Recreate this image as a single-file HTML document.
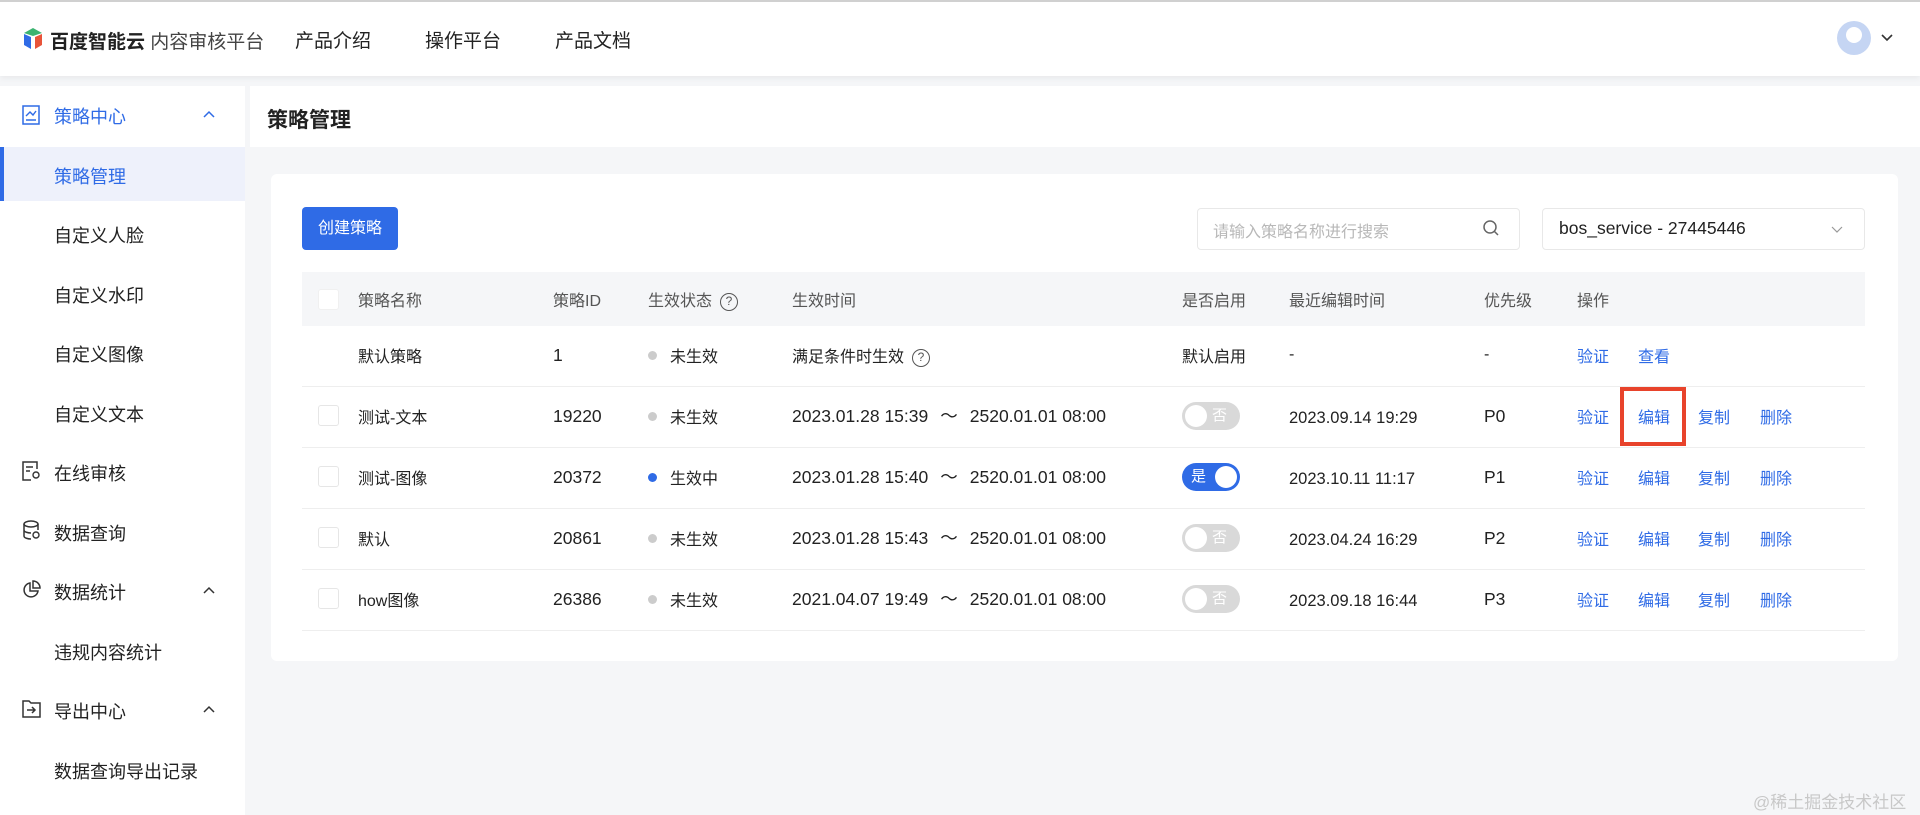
<!DOCTYPE html>
<html><head><meta charset="utf-8"><style>
*{margin:0;padding:0;box-sizing:border-box}
body{width:1920px;height:815px;overflow:hidden;background:#f5f6f8;font-family:"Liberation Sans","Noto Sans CJK SC",sans-serif;color:#222;position:relative}
.a{position:absolute;white-space:nowrap}
.hdr{left:0;top:0;width:1920px;height:76px;background:#fff;border-top:2px solid #d0d0d0;box-shadow:0 2px 6px rgba(0,0,0,.06)}
.nav{font-size:19px;color:#222;top:26px}
.side{left:0;top:86px;width:245px;height:729px;background:#fff}
.si{font-size:18px;color:#222;left:54px}
.sel{left:0;top:147px;width:245px;height:54px;background:#eef1fb;border-left:4px solid #2f6be6}
.card{left:271px;top:174px;width:1627px;height:487px;background:#fff;border-radius:6px}
.th,.td,.lk{line-height:22px;height:22px}
.th{font-size:16px;color:#555;transform:translateY(3px)}
.td{font-size:16px;color:#222}
.c{transform:translateY(3px)}
.et{font-size:16.5px;transform:translateY(2px)}
.big{font-size:17.5px}
.lk{font-size:16px;color:#2f6be6;transform:translateY(3px)}
.cb{width:21px;height:21px;border:1px solid #e6e6e6;border-radius:3px;background:#fff}
.dot{width:9px;height:9px;border-radius:50%;background:#ccc}
.tg{width:58px;height:28px;border-radius:14px;background:#d9d9d9}
.tg i{position:absolute;top:3px;width:22px;height:22px;border-radius:50%;background:#fff}
.tg span{position:absolute;top:3px;font-size:15px;line-height:22px;color:#fff;font-style:normal}
.line{height:1px;background:#eeeeee;left:302px;width:1563px}
.q{display:inline-block;width:18px;height:18px;border:1.5px solid #555;border-radius:50%;font-size:12px;text-align:center;line-height:15px;color:#555;vertical-align:middle;margin-left:8px;font-family:"Liberation Sans",sans-serif}
.tl{margin:0 12px}
</style></head><body>
<div class="a hdr"></div>
<svg class="a" style="left:22px;top:27px" width="22" height="24" viewBox="0 0 22 24"><path d="M11 1 L20 6 L11 9 L2 6Z" fill="#3cb371"/><path d="M2 7 L9 10 L9 22 L2 18Z" fill="#2f6be6"/><path d="M20 7 L13 10 L13 22 L20 18Z" fill="#e8543a"/></svg>
<div class="a" style="left:50px;top:27px;font-size:19px;font-weight:bold;color:#222">百度智能云 <span style="font-weight:normal;color:#444">内容审核平台</span></div>
<div class="a nav" style="left:295px">产品介绍</div>
<div class="a nav" style="left:425px">操作平台</div>
<div class="a nav" style="left:555px">产品文档</div>
<div class="a" style="left:1837px;top:21px;width:34px;height:34px;border-radius:50%;background:#c5d5f3"></div>
<div class="a" style="left:1846px;top:27px;width:16px;height:16px;border-radius:50%;background:#fff"></div>
<svg class="a" style="left:1880px;top:33px" width="14" height="9"><path d="M2 2 L7 7 L12 2" stroke="#333" stroke-width="1.6" fill="none"/></svg>

<div class="a side"></div>
<div class="a sel"></div>
<svg class="a" style="left:22px;top:105px" width="18" height="20"><rect x="1" y="1" width="16" height="18" fill="none" stroke="#2f6be6" stroke-width="1.5"/><path d="M4 11 L8 7 L11 10 L14 6 M4 15 H14" stroke="#2f6be6" stroke-width="1.4" fill="none"/></svg>
<div class="a si" style="top:103px;color:#2f6be6">策略中心</div>
<svg class="a" style="left:202px;top:110px" width="14" height="9"><path d="M2 7 L7 2 L12 7" stroke="#2f6be6" stroke-width="1.5" fill="none"/></svg>
<div class="a si" style="top:163px;color:#2f6be6">策略管理</div>
<div class="a si" style="top:222px">自定义人脸</div>
<div class="a si" style="top:282px">自定义水印</div>
<div class="a si" style="top:341px">自定义图像</div>
<div class="a si" style="top:401px">自定义文本</div>
<svg class="a" style="left:22px;top:461px" width="18" height="20"><path d="M15 8 V1 H1 V19 H9 M4 6 H11 M4 10 H8" stroke="#333" stroke-width="1.5" fill="none"/><circle cx="14" cy="14" r="3" fill="none" stroke="#333" stroke-width="1.4"/></svg>
<div class="a si" style="top:460px">在线审核</div>
<svg class="a" style="left:22px;top:520px" width="18" height="20"><ellipse cx="9" cy="4" rx="7" ry="3" fill="none" stroke="#333" stroke-width="1.5"/><path d="M2 4 V16 C2 18 6 19 9 19 M16 4 V10 M2 10 C2 12 6 13 9 13" stroke="#333" stroke-width="1.5" fill="none"/><circle cx="14" cy="15" r="3" fill="none" stroke="#333" stroke-width="1.4"/></svg>
<div class="a si" style="top:520px">数据查询</div>
<svg class="a" style="left:22px;top:580px" width="19" height="19"><path d="M8 3 A7 7 0 1 0 16 11 H8 Z" fill="none" stroke="#333" stroke-width="1.5"/><path d="M11 1 A7 7 0 0 1 18 8 H11Z" fill="none" stroke="#333" stroke-width="1.5"/></svg>
<div class="a si" style="top:579px">数据统计</div>
<svg class="a" style="left:202px;top:586px" width="14" height="9"><path d="M2 7 L7 2 L12 7" stroke="#333" stroke-width="1.5" fill="none"/></svg>
<div class="a si" style="top:639px">违规内容统计</div>
<svg class="a" style="left:22px;top:699px" width="19" height="19"><path d="M1 2 H7 L9 4 H18 V18 H1 Z M5 11 H13 M10 8 L13 11 L10 14" stroke="#333" stroke-width="1.5" fill="none"/></svg>
<div class="a si" style="top:698px">导出中心</div>
<svg class="a" style="left:202px;top:705px" width="14" height="9"><path d="M2 7 L7 2 L12 7" stroke="#333" stroke-width="1.5" fill="none"/></svg>
<div class="a si" style="top:758px">数据查询导出记录</div>

<div class="a" style="left:250px;top:86px;width:1670px;height:61px;background:#fff"></div>
<div class="a" style="left:267px;top:104px;font-size:21px;font-weight:bold;color:#222">策略管理</div>

<div class="a card"></div>
<div class="a" style="left:302px;top:207px;width:96px;height:43px;background:#2f6be6;border-radius:4px;color:#fff;font-size:16px;text-align:center;line-height:43px">创建策略</div>
<div class="a" style="left:1197px;top:208px;width:323px;height:42px;border:1px solid #e8e8e8;border-radius:4px"></div>
<div class="a" style="left:1213px;top:218px;font-size:16px;color:#b8b8b8">请输入策略名称进行搜索</div>
<svg class="a" style="left:1482px;top:219px" width="18" height="18"><circle cx="8" cy="8" r="6" fill="none" stroke="#666" stroke-width="1.5"/><path d="M12.5 12.5 L16 16" stroke="#666" stroke-width="1.5"/></svg>
<div class="a" style="left:1542px;top:208px;width:323px;height:42px;border:1px solid #e8e8e8;border-radius:4px"></div>
<div class="a" style="left:1559px;top:218px;font-size:17.5px;color:#222">bos_service - 27445446</div>
<svg class="a" style="left:1830px;top:225px" width="14" height="9"><path d="M2 2 L7 7 L12 2" stroke="#999" stroke-width="1.2" fill="none"/></svg>

<div class="a" style="left:302px;top:272px;width:1563px;height:54px;background:#f5f6f8"></div>
<div class="a cb" style="left:318px;top:289px;border-color:#f0f0f0"></div>
<div class="a th" style="left:358px;top:288px">策略名称</div>
<div class="a th" style="left:553px;top:288px">策略ID</div>
<div class="a th" style="left:648px;top:288px">生效状态<span class="q">?</span></div>
<div class="a th" style="left:792px;top:288px">生效时间</div>
<div class="a th" style="left:1182px;top:288px">是否启用</div>
<div class="a th" style="left:1289px;top:288px">最近编辑时间</div>
<div class="a th" style="left:1484px;top:288px">优先级</div>
<div class="a th" style="left:1577px;top:288px">操作</div>

<!-- row1 -->
<div class="a td c" style="left:358px;top:344px">默认策略</div>
<div class="a td big" style="left:553px;top:344px">1</div>
<div class="a dot" style="left:648px;top:351px"></div>
<div class="a td c" style="left:670px;top:344px">未生效</div>
<div class="a td c" style="left:792px;top:344px">满足条件时生效<span class="q">?</span></div>
<div class="a td c" style="left:1182px;top:344px">默认启用</div>
<div class="a td" style="left:1289px;top:344px">-</div>
<div class="a td" style="left:1484px;top:344px">-</div>
<div class="a lk" style="left:1577px;top:344px">验证</div>
<div class="a lk" style="left:1638px;top:344px">查看</div>
<div class="a line" style="top:386px"></div>

<!-- row2 -->
<div class="a cb" style="left:318px;top:405px"></div>
<div class="a td c" style="left:358px;top:405px">测试-文本</div>
<div class="a td big" style="left:553px;top:405px">19220</div>
<div class="a dot" style="left:648px;top:412px"></div>
<div class="a td c" style="left:670px;top:405px">未生效</div>
<div class="a td big" style="left:792px;top:405px">2023.01.28 15:39<span class="tl">～</span>2520.01.01 08:00</div>
<div class="a tg" style="left:1182px;top:402px"><i style="left:3px"></i><span style="left:30px">否</span></div>
<div class="a td et" style="left:1289px;top:405px">2023.09.14 19:29</div>
<div class="a td big" style="left:1484px;top:405px">P0</div>
<div class="a lk" style="left:1577px;top:405px">验证</div>
<div class="a" style="left:1620px;top:387px;width:66px;height:59px;border:4px solid #e8432b"></div>
<div class="a lk" style="left:1638px;top:405px">编辑</div>
<div class="a lk" style="left:1698px;top:405px">复制</div>
<div class="a lk" style="left:1760px;top:405px">删除</div>
<div class="a line" style="top:447px"></div>

<!-- row3 -->
<div class="a cb" style="left:318px;top:466px"></div>
<div class="a td c" style="left:358px;top:466px">测试-图像</div>
<div class="a td big" style="left:553px;top:466px">20372</div>
<div class="a dot" style="left:648px;top:473px;background:#2f6be6"></div>
<div class="a td c" style="left:670px;top:466px">生效中</div>
<div class="a td big" style="left:792px;top:466px">2023.01.28 15:40<span class="tl">～</span>2520.01.01 08:00</div>
<div class="a tg" style="left:1182px;top:463px;background:#2f6be6"><i style="left:33px"></i><span style="left:9px">是</span></div>
<div class="a td et" style="left:1289px;top:466px">2023.10.11 11:17</div>
<div class="a td big" style="left:1484px;top:466px">P1</div>
<div class="a lk" style="left:1577px;top:466px">验证</div>
<div class="a lk" style="left:1638px;top:466px">编辑</div>
<div class="a lk" style="left:1698px;top:466px">复制</div>
<div class="a lk" style="left:1760px;top:466px">删除</div>
<div class="a line" style="top:508px"></div>

<!-- row4 -->
<div class="a cb" style="left:318px;top:527px"></div>
<div class="a td c" style="left:358px;top:527px">默认</div>
<div class="a td big" style="left:553px;top:527px">20861</div>
<div class="a dot" style="left:648px;top:534px"></div>
<div class="a td c" style="left:670px;top:527px">未生效</div>
<div class="a td big" style="left:792px;top:527px">2023.01.28 15:43<span class="tl">～</span>2520.01.01 08:00</div>
<div class="a tg" style="left:1182px;top:524px"><i style="left:3px"></i><span style="left:30px">否</span></div>
<div class="a td et" style="left:1289px;top:527px">2023.04.24 16:29</div>
<div class="a td big" style="left:1484px;top:527px">P2</div>
<div class="a lk" style="left:1577px;top:527px">验证</div>
<div class="a lk" style="left:1638px;top:527px">编辑</div>
<div class="a lk" style="left:1698px;top:527px">复制</div>
<div class="a lk" style="left:1760px;top:527px">删除</div>
<div class="a line" style="top:569px"></div>

<!-- row5 -->
<div class="a cb" style="left:318px;top:588px"></div>
<div class="a td c" style="left:358px;top:588px">how图像</div>
<div class="a td big" style="left:553px;top:588px">26386</div>
<div class="a dot" style="left:648px;top:595px"></div>
<div class="a td c" style="left:670px;top:588px">未生效</div>
<div class="a td big" style="left:792px;top:588px">2021.04.07 19:49<span class="tl">～</span>2520.01.01 08:00</div>
<div class="a tg" style="left:1182px;top:585px"><i style="left:3px"></i><span style="left:30px">否</span></div>
<div class="a td et" style="left:1289px;top:588px">2023.09.18 16:44</div>
<div class="a td big" style="left:1484px;top:588px">P3</div>
<div class="a lk" style="left:1577px;top:588px">验证</div>
<div class="a lk" style="left:1638px;top:588px">编辑</div>
<div class="a lk" style="left:1698px;top:588px">复制</div>
<div class="a lk" style="left:1760px;top:588px">删除</div>
<div class="a line" style="top:630px"></div>

<div class="a" style="left:1753px;top:788px;font-size:17px;color:#c8c8c8">@稀土掘金技术社区</div>
</body></html>
